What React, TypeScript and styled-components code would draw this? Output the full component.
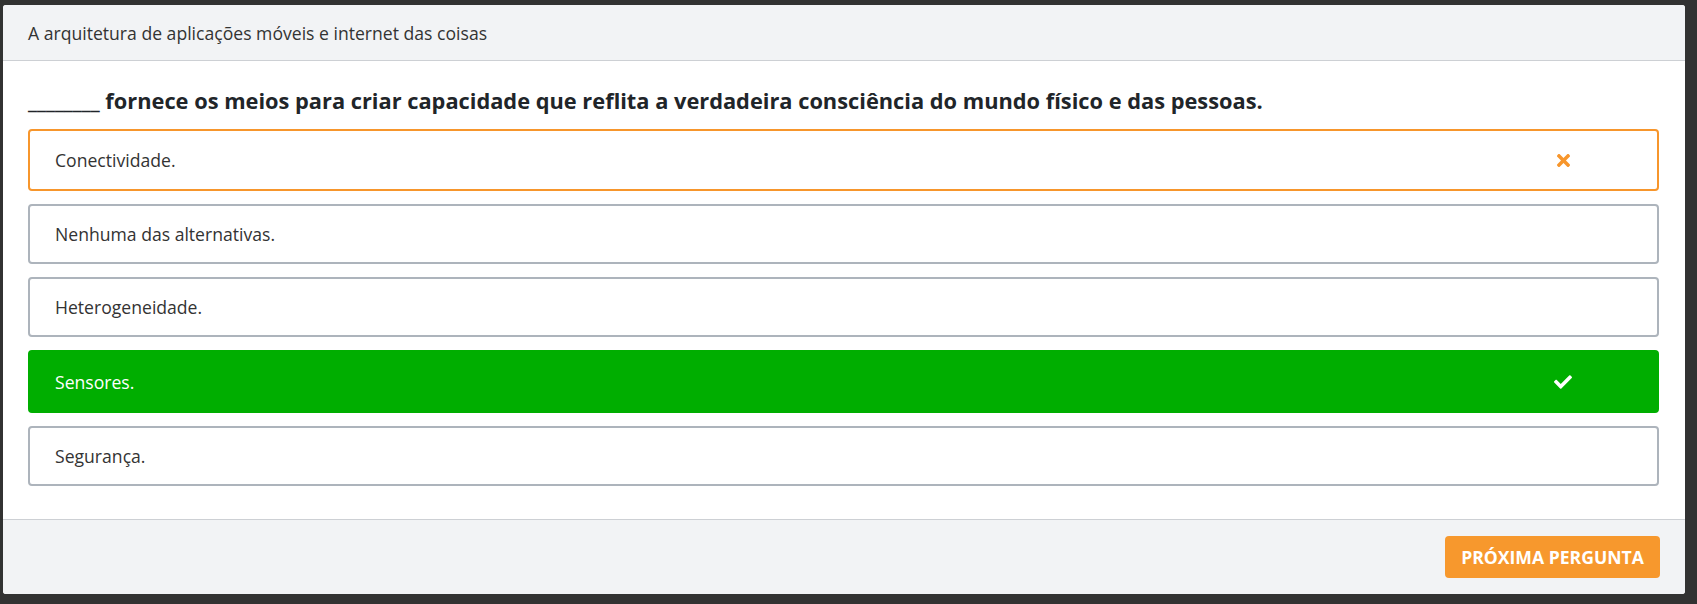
import * as React from "react";
import styled, { createGlobalStyle } from "styled-components";
import { FaTimes, FaCheck } from "react-icons/fa";

const GlobalStyle = createGlobalStyle`
  html, body {
    margin: 0;
    padding: 0;
    background-color: #323232;
  }
  body {
    font-family: "Open Sans", "Noto Sans", "Liberation Sans", sans-serif;
    color: #212529;
  }
  * {
    box-sizing: border-box;
  }
`;

const StyledPage = styled.div`
  padding: 5px 12px 9px 3px;
`;

const StyledCard = styled.div`
  background-color: #ffffff;
  border-radius: 3px;
  overflow: hidden;
`;

const StyledHeader = styled.header`
  background-color: #f2f3f5;
  border-bottom: 1px solid #cdd0d4;
  padding: 16px 25px 15px;
  font-size: 17.6px;
  line-height: 24px;
  color: #333333;
`;

const StyledBody = styled.div`
  padding: 20px 26px 33px 25px;
`;

const StyledQuestion = styled.h2`
  margin: 5px 0 13px 0;
  font-size: 21.8px;
  line-height: 30px;
  font-weight: 700;
  color: #212529;
`;

const StyledOptions = styled.div`
  display: flex;
  flex-direction: column;
  gap: 13px;
`;

type Status = "idle" | "wrong" | "right";

const StyledOption = styled.div<{ $status: Status; $height: number }>`
  display: flex;
  align-items: center;
  height: ${(p) => p.$height}px;
  padding: 0 79px 0 25px;
  border-radius: 4px;
  font-size: 17.6px;
  line-height: 24px;
  border: 2px solid
    ${(p) =>
      p.$status === "wrong"
        ? "#f7962c"
        : p.$status === "right"
        ? "#00ae00"
        : "#adb4bc"};
  background-color: ${(p) => (p.$status === "right" ? "#00ae00" : "#ffffff")};
  color: ${(p) => (p.$status === "right" ? "#ffffff" : "#333333")};
`;

const StyledOptionText = styled.span`
  flex: 1;
`;

const StyledIconSlot = styled.span<{ $status: Status }>`
  width: 30px;
  display: flex;
  justify-content: center;
  color: ${(p) => (p.$status === "wrong" ? "#f7962c" : "#ffffff")};
`;

const StyledFooter = styled.footer`
  background-color: #f2f3f5;
  border-top: 1px solid #cdd0d4;
  padding: 16px 25px 16px;
  display: flex;
  justify-content: flex-end;
`;

const StyledButton = styled.button`
  width: 215px;
  height: 42px;
  padding: 0;
  border: none;
  border-radius: 4px;
  background-color: #f7982d;
  color: #ffffff;
  font-family: "Open Sans", "Noto Sans", "Liberation Sans", sans-serif;
  font-size: 17.6px;
  font-weight: 700;
  text-transform: uppercase;
  cursor: pointer;
`;

const options: { text: string; status: Status; height: number }[] = [
  { text: "Conectividade.", status: "wrong", height: 62 },
  { text: "Nenhuma das alternativas.", status: "idle", height: 60 },
  { text: "Heterogeneidade.", status: "idle", height: 60 },
  { text: "Sensores.", status: "right", height: 63 },
  { text: "Segurança.", status: "idle", height: 60 },
];

export default function App() {
  return (
    <>
      <GlobalStyle />
      <StyledPage>
        <StyledCard>
          <StyledHeader>
            A arquitetura de aplicações móveis e internet das coisas
          </StyledHeader>
          <StyledBody>
            <StyledQuestion>
              ________ fornece os meios para criar capacidade que reflita a
              verdadeira consciência do mundo físico e das pessoas.
            </StyledQuestion>
            <StyledOptions>
              {options.map((option) => (
                <StyledOption
                  key={option.text}
                  $status={option.status}
                  $height={option.height}
                >
                  <StyledOptionText>{option.text}</StyledOptionText>
                  <StyledIconSlot $status={option.status}>
                    {option.status === "wrong" && <FaTimes size={19} />}
                    {option.status === "right" && <FaCheck size={18} />}
                  </StyledIconSlot>
                </StyledOption>
              ))}
            </StyledOptions>
          </StyledBody>
          <StyledFooter>
            <StyledButton type="button">Próxima pergunta</StyledButton>
          </StyledFooter>
        </StyledCard>
      </StyledPage>
    </>
  );
}
